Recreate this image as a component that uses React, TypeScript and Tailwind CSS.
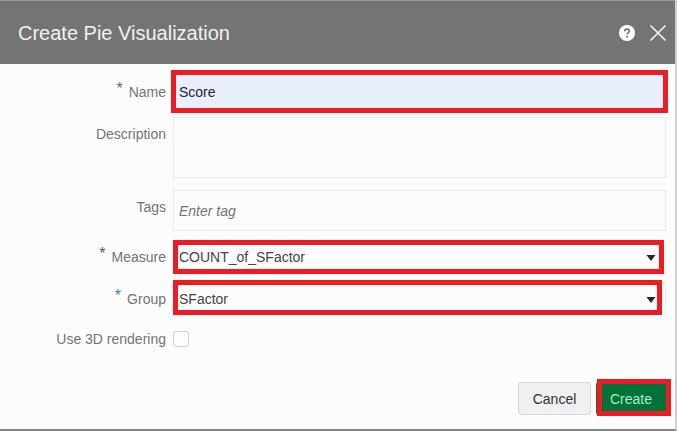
import { useState, type ReactNode } from "react";

const CONTROL =
  "block w-full appearance-none border border-[#ebebeb] bg-[#fcfcfc] px-[5px] text-[14px] leading-5 text-[#444] outline-none";

function FieldLabel({
  htmlFor,
  star,
  align = "items-center",
  children,
}: {
  htmlFor: string;
  star?: string;
  align?: string;
  children: ReactNode;
}) {
  return (
    <div className={`flex w-[166px] shrink-0 justify-end ${align}`}>
      {star && (
        <span aria-hidden="true" className={`mr-1.5 pb-1.5 text-[16px] leading-5 ${star}`}>
          *
        </span>
      )}
      <label htmlFor={htmlFor} className="text-[14px] leading-5 text-[#747474]">
        {children}
      </label>
    </div>
  );
}

function Highlight({ className }: { className: string }) {
  return <span className={`pointer-events-none absolute border-[5px] border-[#ed1c24] ${className}`} />;
}

function SelectField({ id, options, highlight }: { id: string; options: string[]; highlight: string }) {
  return (
    <div className="relative flex-1">
      <select id={id} className={`${CONTROL} h-8`}>
        {options.map((option) => (
          <option key={option}>{option}</option>
        ))}
      </select>
      <svg
        viewBox="0 0 10 6"
        aria-hidden="true"
        className="pointer-events-none absolute top-3.5 right-2.5 h-1.5 w-2.5"
      >
        <path d="M0.5 0h9L5 6z" fill="#262626" />
      </svg>
      <Highlight className={highlight} />
    </div>
  );
}

export default function App() {
  const [name, setName] = useState("Score");

  return (
    <div
      role="dialog"
      aria-labelledby="dialog-title"
      className="flex min-h-screen flex-col border-r-2 border-b-2 border-r-[#cfcfcf] border-b-[#858585] bg-[#fcfcfc] font-['Liberation_Sans',Arial,sans-serif]"
    >
      <header className="flex h-16 items-center border-t border-[#949a97] bg-[#747474] pr-2 pl-[18px]">
        <h1 id="dialog-title" className="flex-1 text-[20px] leading-6 text-[#f2f2f2]">
          Create Pie Visualization
        </h1>
        <button type="button" aria-label="Help" className="mr-3.5">
          <svg viewBox="0 0 16 16" className="block size-4">
            <circle cx="8" cy="8" r="8" fill="#fff" />
            <path
              d="M5.7 6.3C5.7 4.7 6.7 3.9 8 3.9s2.3.8 2.3 2.1c0 1.7-2.2 1.8-2.2 3.6"
              fill="none"
              stroke="#666"
              strokeWidth="1.5"
            />
            <rect x="7.2" y="10.8" width="1.7" height="1.7" fill="#666" />
          </svg>
        </button>
        <button type="button" aria-label="Close">
          <svg viewBox="0 0 18 18" className="block size-[18px]">
            <path d="M1.5 1.5l15 15M16.5 1.5l-15 15" stroke="#f0f0f0" strokeWidth="1.7" />
          </svg>
        </button>
      </header>

      <form className="flex flex-1 flex-col pt-[9px] pr-[9px]" onSubmit={(event) => event.preventDefault()}>
        <div className="flex gap-[7px]">
          <FieldLabel htmlFor="name" star="text-[#666]">
            Name
          </FieldLabel>
          <div className="relative flex-1">
            <input
              id="name"
              type="text"
              required
              value={name}
              onChange={(event) => setName(event.target.value)}
              className="block h-[37px] w-full border border-[#e8eefa] bg-[#e8eefa] px-[5px] text-[14px] leading-5 text-[#23232f] outline-none"
            />
            <Highlight className="-inset-x-0.5 -inset-y-[3px]" />
          </div>
        </div>

        <div className="mt-[7px] flex gap-[7px]">
          <FieldLabel htmlFor="description" align="items-start pt-[7px]">
            Description
          </FieldLabel>
          <div className="flex-1">
            <textarea id="description" className={`${CONTROL} h-[61px] resize-none py-2`} />
          </div>
        </div>

        <div className="mt-3 flex gap-[7px]">
          <FieldLabel htmlFor="tags" align="items-start pt-[7px]">
            Tags
          </FieldLabel>
          <div className="flex-1">
            <input
              id="tags"
              type="text"
              placeholder="Enter tag"
              className={`${CONTROL} h-[41px] placeholder:text-[#747474] placeholder:italic`}
            />
          </div>
        </div>

        <div className="mt-2.5 flex gap-[7px]">
          <FieldLabel htmlFor="measure" star="text-[#555]">
            Measure
          </FieldLabel>
          <SelectField id="measure" options={["COUNT_of_SFactor"]} highlight="-top-px right-0.5 -bottom-px left-0" />
        </div>

        <div className="mt-2.5 flex gap-[7px]">
          <FieldLabel htmlFor="group" star="text-[#3f7fb5]">
            Group
          </FieldLabel>
          <SelectField id="group" options={["SFactor"]} highlight="-top-[3px] right-1 bottom-0 left-0" />
        </div>

        <div className="mt-3.5 flex items-center gap-[7px]">
          <FieldLabel htmlFor="rendering">Use 3D rendering</FieldLabel>
          <input
            id="rendering"
            type="checkbox"
            className="size-4 appearance-none rounded-[3px] border border-[#d2d2d2] bg-[#fdfdfd] checked:bg-[#00753a]"
          />
        </div>

        <div className="mt-auto mb-3.5 flex justify-end gap-[5px]">
          <button
            type="button"
            className="h-[33px] w-[73px] rounded-[3px] border border-[#d8d8d8] bg-[#f0f0f0] text-[14px] leading-5 text-[#333]"
          >
            Cancel
          </button>
          <button
            type="submit"
            className="relative h-[33px] w-[70px] rounded-[3px] bg-[#00733a] text-[14px] leading-5 text-[#b5e8c4]"
          >
            Create
            <Highlight className="-top-[3px] -right-[5px] -bottom-px left-px" />
          </button>
        </div>
      </form>
    </div>
  );
}
